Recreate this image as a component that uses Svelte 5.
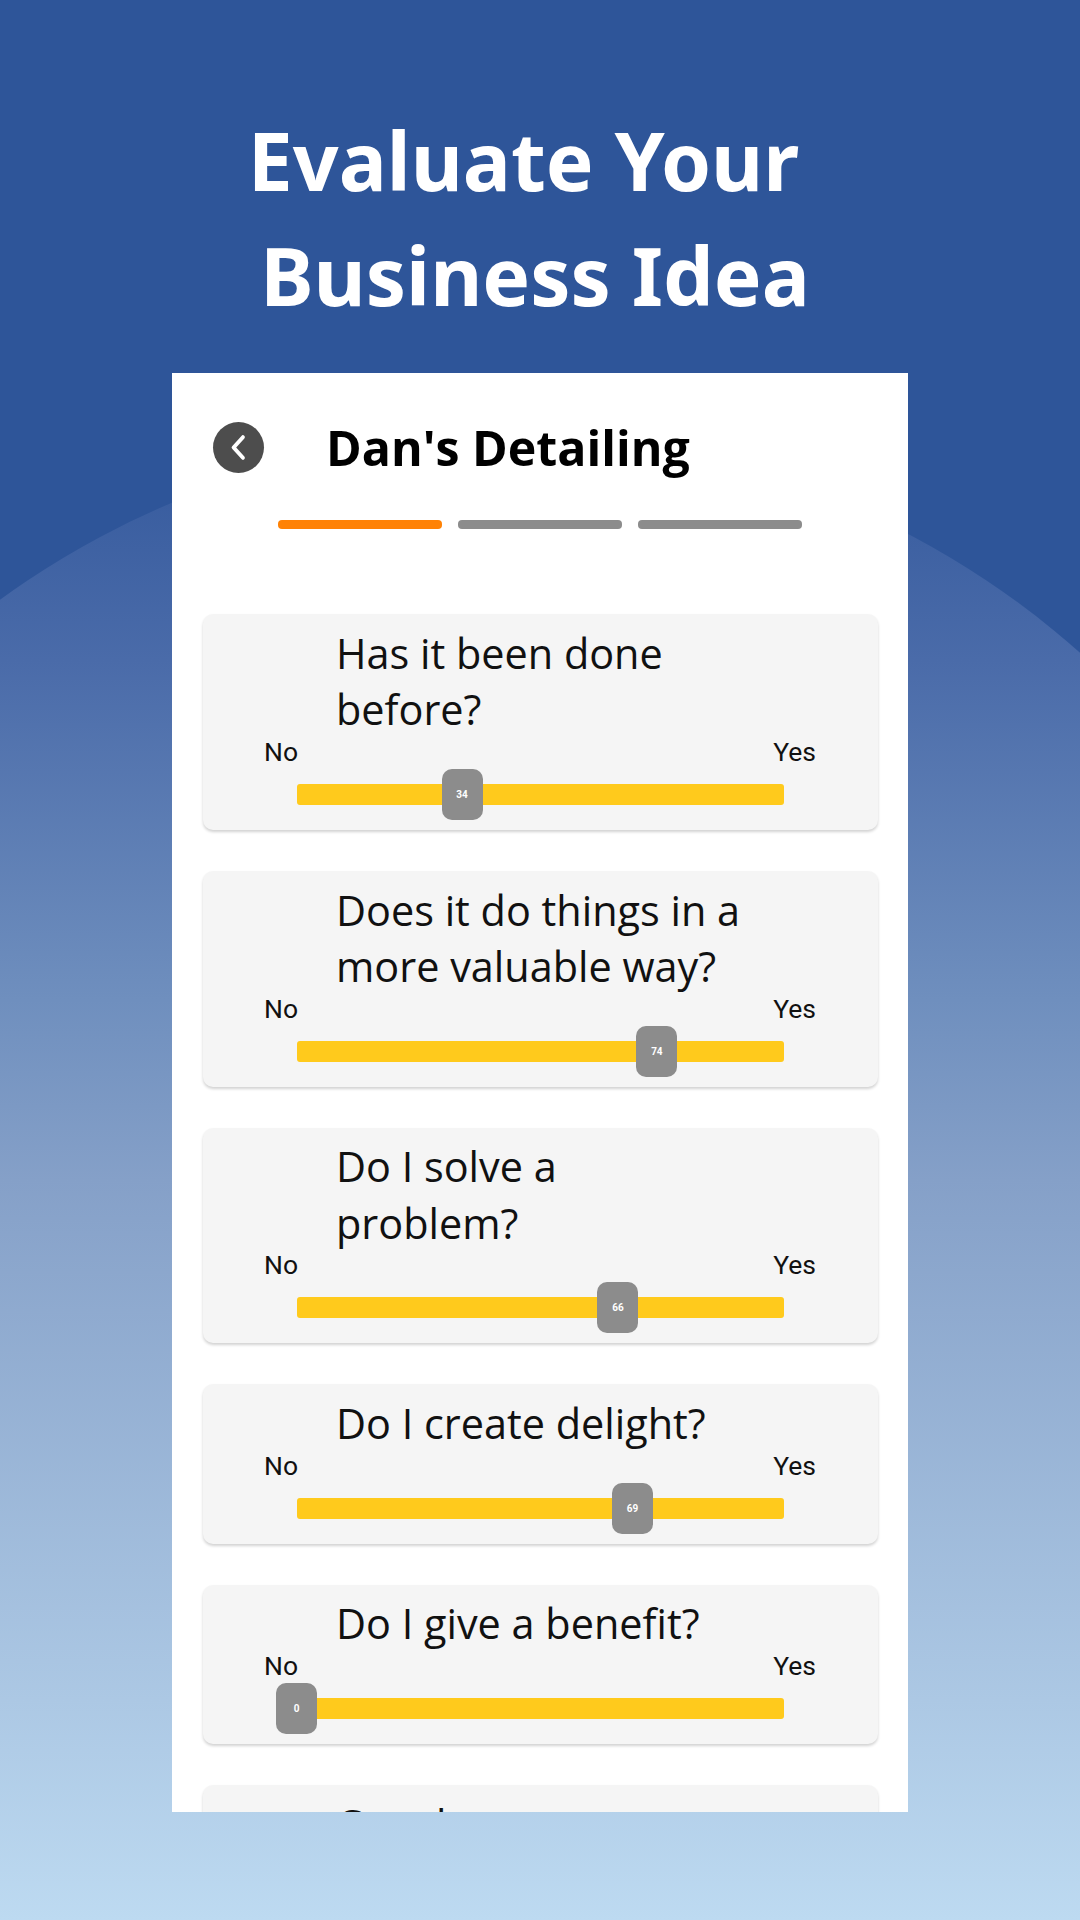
<script>
  const questions = [
    { text: 'Has it been done before?', value: 34 },
    { text: 'Does it do things in a more valuable way?', value: 74 },
    { text: 'Do I solve a problem?', value: 66 },
    { text: 'Do I create delight?', value: 69 },
    { text: 'Do I give a benefit?', value: 0 },
    { text: 'Can they save more money?', value: 50 }
  ];
</script>

<div class="page">
  <div class="arc" aria-hidden="true"></div>
  <h1 class="headline">
    <span class="line-one">Evaluate Your</span>
    <span class="line-two">Business Idea</span>
  </h1>
  <main class="phone">
    <header class="top">
      <button class="back" aria-label="Back">
        <svg width="51" height="51" viewBox="0 0 52 52">
          <path d="M30.5 15.5 L21 26 L30.5 36.5" fill="none" stroke="#fff" stroke-width="4" stroke-linecap="round" stroke-linejoin="round" />
        </svg>
      </button>
      <h2 class="name">Dan's Detailing</h2>
    </header>
    <div class="steps">
      <span class="step active"></span>
      <span class="step"></span>
      <span class="step"></span>
    </div>
    <div class="list">
      {#each questions as q}
        <section class="item">
          <p class="question">{q.text}</p>
          <div class="ends"><span>No</span><span>Yes</span></div>
          <div class="slider">
            <div class="track"></div>
            <div class="thumb" style="left: {q.value}%">{q.value}</div>
          </div>
        </section>
      {/each}
    </div>
  </main>
</div>

<style>
  :global(body) { margin: 0; background: #2f5599; }
  .page {
    position: relative;
    width: 1080px;
    height: 1920px;
    overflow: hidden;
    background: #2e5599;
    display: flex;
    flex-direction: column;
    align-items: center;
  }
  .arc {
    position: absolute;
    left: -356px;
    top: 435px;
    width: 1726px;
    height: 1726px;
    border-radius: 50%;
    background: linear-gradient(180deg, #385c9f 0px, #3a5ea0 65px, #4a6ba9 225px, #6f8fbe 565px, #85a0c8 745px, #acc8e4 1265px, #bddaf1 1485px);
  }
  .headline {
    position: relative;
    margin: 0;
    padding-top: 103px;
    width: 100%;
    height: 270px;
    font-family: "Noto Sans", sans-serif;
    font-weight: 700;
    font-size: 80.3px;
    line-height: 115px;
    color: #fff;
    text-align: center;
  }
  .headline span { display: block; }
  .line-one { padding-right: 33px; }
  .line-two { padding-right: 10px; }
  .phone {
    position: relative;
    width: 736px;
    height: 1439px;
    overflow: hidden;
    background: #fff;
    box-sizing: border-box;
    padding: 48px 30px 0 31px;
  }
  .top {
    display: flex;
    align-items: center;
    gap: 62px;
    padding-left: 10px;
  }
  .back {
    width: 51px;
    height: 51px;
    padding: 0;
    border: 0;
    border-radius: 50%;
    background: #4d4d4d;
    display: block;
  }
  .back svg { display: block; }
  .name {
    margin: 0;
    font-family: "Open Sans", sans-serif;
    font-weight: 700;
    font-size: 48.3px;
    line-height: 52px;
    color: #000;
  }
  .steps {
    display: flex;
    justify-content: center;
    gap: 16px;
    margin-top: 47px;
    margin-bottom: 85px;
    padding-right: 2px;
  }
  .step {
    width: 164px;
    height: 9px;
    border-radius: 4px;
    background: #8c8c8c;
  }
  .step.active { background: #ff8205; }
  .list {
    display: flex;
    flex-direction: column;
    gap: 41px;
  }
  .item {
    box-sizing: border-box;
    padding: 10.75px 0 10px;
    border-radius: 10px;
    background: #f5f5f5;
    box-shadow: 0 2px 3px rgba(0, 0, 0, 0.18);
  }
  .question {
    margin: 0 0 0 133px;
    max-width: 408px;
    font-family: "Open Sans", sans-serif;
    font-size: 41.4px;
    line-height: 56.5px;
    color: #111;
  }
  .ends {
    display: flex;
    justify-content: space-between;
    padding: 0 62px 0 61px;
    font-family: Roboto, sans-serif;
    font-size: 26.5px;
    line-height: 28px;
    color: #111;
  }
  .slider {
    position: relative;
    display: flex;
    align-items: center;
    height: 51px;
    margin: 3px 94px 0;
  }
  .track {
    width: 100%;
    height: 21px;
    border-radius: 3px;
    background: #ffca1c;
  }
  .thumb {
    position: absolute;
    top: 0;
    width: 41px;
    height: 51px;
    margin-left: -21px;
    border-radius: 10px;
    background: #8c8c8c;
    color: #fff;
    font-family: Roboto, sans-serif;
    font-weight: 700;
    font-size: 10px;
    line-height: 51px;
    text-align: center;
  }
</style>
